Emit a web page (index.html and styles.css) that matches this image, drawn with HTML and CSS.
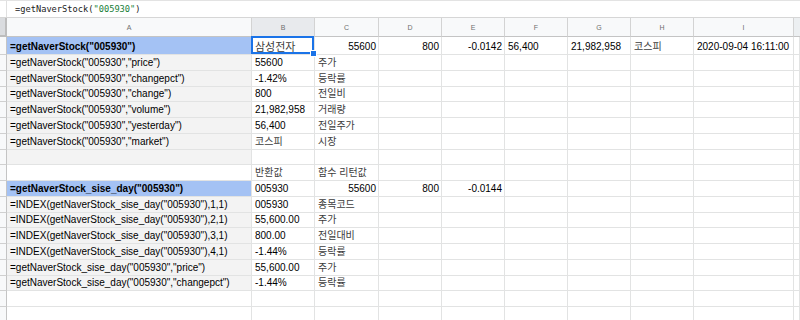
FILE: index.html
```html
<!DOCTYPE html>
<html lang="ko">
<head>
<meta charset="utf-8">
<link rel="stylesheet" href="styles.css">
</head>
<body>
<div class="fbar">
  <div class="fbar-gutter"></div>
  <div class="fbar-text">=getNaverStock(<span class="str">"005930"</span>)</div>
</div>
<div class="sheet">
  <div class="row hdr">
    <div class="rh corner"></div>
    <div class="ch">A</div><div class="ch sel">B</div><div class="ch">C</div><div class="ch">D</div><div class="ch">E</div><div class="ch">F</div><div class="ch">G</div><div class="ch">H</div><div class="ch">I</div><div class="ch last"></div>
  </div>
  <div class="row r1">
    <div class="rh"></div>
    <div class="c blue b">=getNaverStock("005930")</div>
    <div class="c active big ko">삼성전자<span class="handle"></span></div>
    <div class="c n">55600</div><div class="c n">800</div><div class="c n">-0.0142</div>
    <div class="c">56,400</div><div class="c">21,982,958</div><div class="c ko">코스피</div><div class="c">2020-09-04 16:11:00</div><div class="c"></div>
  </div>
  <div class="row">
    <div class="rh"></div><div class="c gray">=getNaverStock("005930","price")</div><div class="c">55600</div><div class="c ko">주가</div>
    <div class="c"></div><div class="c"></div><div class="c"></div><div class="c"></div><div class="c"></div><div class="c"></div><div class="c"></div>
  </div>
  <div class="row">
    <div class="rh"></div><div class="c gray">=getNaverStock("005930","changepct")</div><div class="c">-1.42%</div><div class="c ko">등락률</div>
    <div class="c"></div><div class="c"></div><div class="c"></div><div class="c"></div><div class="c"></div><div class="c"></div><div class="c"></div>
  </div>
  <div class="row">
    <div class="rh"></div><div class="c gray">=getNaverStock("005930","change")</div><div class="c">800</div><div class="c ko">전일비</div>
    <div class="c"></div><div class="c"></div><div class="c"></div><div class="c"></div><div class="c"></div><div class="c"></div><div class="c"></div>
  </div>
  <div class="row">
    <div class="rh"></div><div class="c gray">=getNaverStock("005930","volume")</div><div class="c">21,982,958</div><div class="c ko">거래량</div>
    <div class="c"></div><div class="c"></div><div class="c"></div><div class="c"></div><div class="c"></div><div class="c"></div><div class="c"></div>
  </div>
  <div class="row">
    <div class="rh"></div><div class="c gray">=getNaverStock("005930","yesterday")</div><div class="c">56,400</div><div class="c ko">전일주가</div>
    <div class="c"></div><div class="c"></div><div class="c"></div><div class="c"></div><div class="c"></div><div class="c"></div><div class="c"></div>
  </div>
  <div class="row">
    <div class="rh"></div><div class="c gray">=getNaverStock("005930","market")</div><div class="c ko">코스피</div><div class="c ko">시장</div>
    <div class="c"></div><div class="c"></div><div class="c"></div><div class="c"></div><div class="c"></div><div class="c"></div><div class="c"></div>
  </div>
  <div class="row">
    <div class="rh"></div><div class="c gray"></div><div class="c"></div><div class="c"></div>
    <div class="c"></div><div class="c"></div><div class="c"></div><div class="c"></div><div class="c"></div><div class="c"></div><div class="c"></div>
  </div>
  <div class="row">
    <div class="rh"></div><div class="c"></div><div class="c ko">반환값</div><div class="c ko">함수 리턴값</div>
    <div class="c"></div><div class="c"></div><div class="c"></div><div class="c"></div><div class="c"></div><div class="c"></div><div class="c"></div>
  </div>
  <div class="row">
    <div class="rh"></div><div class="c blue b">=getNaverStock_sise_day("005930")</div><div class="c">005930</div><div class="c n">55600</div>
    <div class="c n">800</div><div class="c n">-0.0144</div><div class="c"></div><div class="c"></div><div class="c"></div><div class="c"></div><div class="c"></div>
  </div>
  <div class="row">
    <div class="rh"></div><div class="c gray">=INDEX(getNaverStock_sise_day("005930"),1,1)</div><div class="c">005930</div><div class="c ko">종목코드</div>
    <div class="c"></div><div class="c"></div><div class="c"></div><div class="c"></div><div class="c"></div><div class="c"></div><div class="c"></div>
  </div>
  <div class="row">
    <div class="rh"></div><div class="c gray">=INDEX(getNaverStock_sise_day("005930"),2,1)</div><div class="c">55,600.00</div><div class="c ko">주가</div>
    <div class="c"></div><div class="c"></div><div class="c"></div><div class="c"></div><div class="c"></div><div class="c"></div><div class="c"></div>
  </div>
  <div class="row">
    <div class="rh"></div><div class="c gray">=INDEX(getNaverStock_sise_day("005930"),3,1)</div><div class="c">800.00</div><div class="c ko">전일대비</div>
    <div class="c"></div><div class="c"></div><div class="c"></div><div class="c"></div><div class="c"></div><div class="c"></div><div class="c"></div>
  </div>
  <div class="row">
    <div class="rh"></div><div class="c gray">=INDEX(getNaverStock_sise_day("005930"),4,1)</div><div class="c">-1.44%</div><div class="c ko">등락률</div>
    <div class="c"></div><div class="c"></div><div class="c"></div><div class="c"></div><div class="c"></div><div class="c"></div><div class="c"></div>
  </div>
  <div class="row">
    <div class="rh"></div><div class="c gray">=getNaverStock_sise_day("005930","price")</div><div class="c">55,600.00</div><div class="c ko">주가</div>
    <div class="c"></div><div class="c"></div><div class="c"></div><div class="c"></div><div class="c"></div><div class="c"></div><div class="c"></div>
  </div>
  <div class="row">
    <div class="rh"></div><div class="c gray">=getNaverStock_sise_day("005930","changepct")</div><div class="c">-1.44%</div><div class="c ko">등락률</div>
    <div class="c"></div><div class="c"></div><div class="c"></div><div class="c"></div><div class="c"></div><div class="c"></div><div class="c"></div>
  </div>
  <div class="row">
    <div class="rh"></div><div class="c"></div><div class="c"></div><div class="c"></div>
    <div class="c"></div><div class="c"></div><div class="c"></div><div class="c"></div><div class="c"></div><div class="c"></div><div class="c"></div>
  </div>
  <div class="row">
    <div class="rh"></div><div class="c"></div><div class="c"></div><div class="c"></div>
    <div class="c"></div><div class="c"></div><div class="c"></div><div class="c"></div><div class="c"></div><div class="c"></div><div class="c"></div>
  </div>
</div>
</body>
</html>
```
FILE: styles.css
```css
html, body {
  margin: 0;
  padding: 0;
  background: #fff;
  overflow: hidden;
  width: 800px;
  height: 320px;
}
body {
  font-family: "Liberation Sans", "Noto Sans CJK KR", Arial, sans-serif;
  color: #000;
}
.fbar {
  border-top: 1px solid #e3e3e3;
  border-bottom: 1px solid #d6d6d6;
  box-sizing: content-box;
  display: flex;
  align-items: stretch;
  height: 16px;
}
.fbar-gutter {
  width: 6px;
  border-right: 1px solid #e0e0e0;
}
.fbar-text {
  padding-left: 8px;
  font-family: "DejaVu Sans Mono", "Liberation Mono", monospace;
  font-size: 8.7px;
  line-height: 16px;
  color: #222;
}
.fbar-text .str {
  color: #188038;
}
.sheet {
  display: flex;
  flex-direction: column;
}
.row {
  display: grid;
  grid-template-columns: 7px 245px 63px 64px 63px 63px 63px 63px 63px 100px 1fr;
  height: 15.77px;
  flex: none;
}
.row.hdr {
  height: 19px;
}
.row.r1 {
  height: 18px;
}
.rh {
  background: #f8f9fa;
  border-right: 1px solid #c4c4c4;
  border-bottom: 1px solid #d0d0d0;
  box-sizing: border-box;
}
.rh.corner {
  background: #dadcdf;
  border-right: 2px solid #bdbdbd;
  border-bottom: 2px solid #bdbdbd;
}
.ch {
  background: #f8f9fa;
  border-right: 1px solid #d3d3d3;
  border-bottom: 1px solid #c4c4c4;
  box-sizing: border-box;
  font-size: 7px;
  color: #6f6f6f;
  display: flex;
  align-items: center;
  justify-content: center;
  padding-top: 1px;
}
.ch.sel {
  background: #e8eaed;
}
.ch.last {
  background: #eceff1;
  border-right: none;
}
.c {
  border-right: 1px solid #e2e3e3;
  border-bottom: 1px solid #e2e3e3;
  box-sizing: border-box;
  font-size: 10px;
  line-height: 12px;
  padding: 0 2px 1px 3px;
  display: flex;
  align-items: flex-end;
  white-space: nowrap;
  overflow: visible;
  min-width: 0;
  background: #fff;
}
.c.n {
  justify-content: flex-end;
}
.c.b {
  font-weight: bold;
}
.c.ko {
  color: #3c3c3c;
}
.c.gray {
  background: #f3f3f3;
}
.c.blue {
  background: #a4c2f4;
}
.c.big {
  font-size: 11px;
}
.c.active {
  position: relative;
}
.c.active::after {
  content: "";
  position: absolute;
  left: -1px;
  top: -1px;
  right: 0;
  bottom: 0;
  border: 2px solid #1a73e8;
}
.handle {
  position: absolute;
  right: -3px;
  bottom: -3px;
  width: 5px;
  height: 5px;
  background: #1a73e8;
  border: 1px solid #fff;
  z-index: 2;
}
```
